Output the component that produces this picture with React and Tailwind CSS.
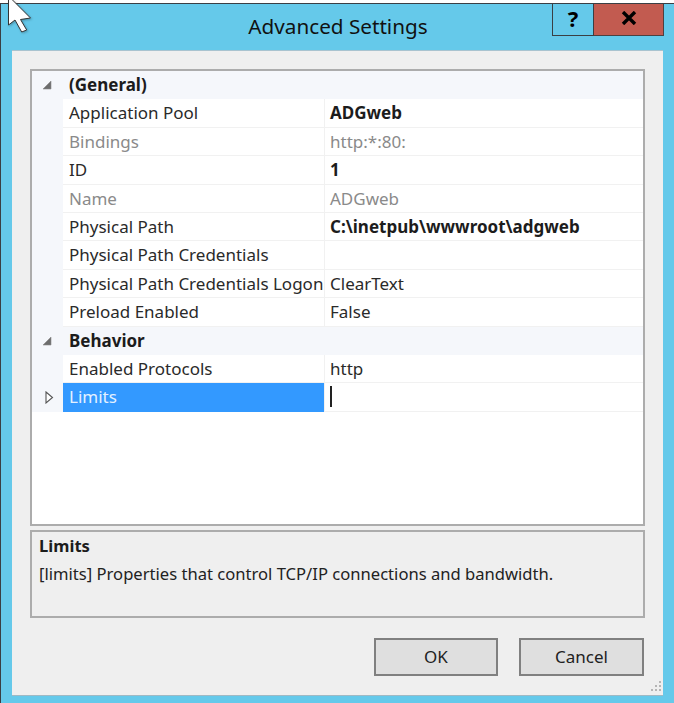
import React from 'react';

const FONT = "font-['Noto_Sans','Open_Sans',sans-serif]";

const rows = [
  { type: 'group', label: '(General)' },
  { label: 'Application Pool', value: 'ADGweb', bold: true },
  { label: 'Bindings', value: 'http:*:80:', muted: true },
  { label: 'ID', value: '1', bold: true },
  { label: 'Name', value: 'ADGweb', muted: true },
  { label: 'Physical Path', value: 'C:\\inetpub\\wwwroot\\adgweb', bold: true },
  { label: 'Physical Path Credentials', value: '' },
  { label: 'Physical Path Credentials Logon', value: 'ClearText' },
  { label: 'Preload Enabled', value: 'False' },
  { type: 'group', label: 'Behavior' },
  { label: 'Enabled Protocols', value: 'http' },
  { label: 'Limits', value: '', selected: true },
];

function Expanded() {
  return (
    <svg width="10" height="10" viewBox="0 0 10 10">
      <path d="M9 1 V9 H1 Z" fill="#6d6d6d" stroke="#8a8a8a" strokeWidth="0.6" />
    </svg>
  );
}

function Collapsed() {
  return (
    <svg width="9" height="13" viewBox="0 0 9 13">
      <path d="M1 1 L7.5 6.5 L1 12 Z" fill="#fff" stroke="#555" strokeWidth="1.1" />
    </svg>
  );
}

function Row({ row }) {
  if (row.type === 'group') {
    return (
      <div className="flex h-[28.4px] items-center bg-[#f5f7fb]">
        <div className="flex w-[32px] shrink-0 justify-center pr-[2px]"><Expanded /></div>
        <div className="pl-[5px] font-bold text-[#1c1c1c]">{row.label}</div>
      </div>
    );
  }
  return (
    <div className="flex h-[28.4px] items-stretch bg-white">
      <div className="flex w-[31px] shrink-0 items-center justify-center bg-[#f5f7fb] pl-[3px]">
        {row.selected && <Collapsed />}
      </div>
      <div className={`flex w-[261px] shrink-0 items-center border-b pl-[6px] whitespace-nowrap ${
        row.selected
          ? 'border-[#3399ff] bg-[#3399ff] text-[#e4f1ff]'
          : row.muted ? 'border-[#f1f1f1] text-[#8a8a8a]' : 'border-[#f1f1f1] text-[#2a2a2a]'
      }`}>
        {row.label}
      </div>
      <div className={`flex flex-1 items-center border-b border-l border-[#f1f1f1] pl-[5px] ${
        row.bold ? 'font-bold text-[#1c1c1c]' : row.muted ? 'text-[#8a8a8a]' : 'text-[#2a2a2a]'
      }`}>
        {row.selected ? <span className="h-[21px] w-[2px] bg-[#222]" /> : row.value}
      </div>
    </div>
  );
}

export default function App() {
  return (
    <div className={`relative h-[703px] w-[674px] overflow-hidden bg-white pt-[3px] text-[17px] ${FONT}`}>
      <div className="flex h-[700px] flex-col border-l border-t border-[#3a3f44] bg-[#65c9ea]">
        {/* Title bar */}
        <div className="flex h-[46px] shrink-0 items-start">
          <div className="w-[551px] pl-[123px] pt-[8px] text-center text-[20.7px] leading-[28px] text-[#111]">
            Advanced Settings
          </div>
          <div className="flex h-[32px] w-[42px] items-center justify-center border-x border-b border-[#3a3f44] pb-[3px] text-[22px] font-bold text-black">?</div>
          <div className="flex h-[32px] w-[70px] items-center justify-center border-r border-b border-[#4d4040] bg-[#c25b50] pb-[3px]">
            <svg width="16" height="14" viewBox="0 0 16 14">
              <path d="M2 1 L14 13 M14 1 L2 13" stroke="#000" strokeWidth="3.4" />
            </svg>
          </div>
        </div>

        {/* Dialog body */}
        <div className="ml-[11px] flex h-[645px] w-[651px] flex-col border-t border-[#a9c3cf] bg-[#efefef] px-[18px] pt-[18px] shadow-[0_1px_0_#9fb9c4]">
          <div className="h-[457px] border-2 border-[#acacac] bg-white">
            {rows.map((row) => <Row key={row.label} row={row} />)}
          </div>

          <div className="mt-[4px] h-[88px] border-2 border-[#acacac] px-[7px] pt-[3px] text-[16.6px] text-[#222]">
            <div className="font-bold leading-[22px] text-[#1c1c1c]">Limits</div>
            <div className="mt-[6px] leading-[22px]">[limits] Properties that control TCP/IP connections and bandwidth.</div>
          </div>

          <div className="mt-[20px] flex justify-end gap-[21px] pr-[1px]">
            <button className="h-[38px] w-[124px] border-2 border-[#808080] bg-[#dfdfdf] text-[#222]">OK</button>
            <button className="h-[38px] w-[125px] border-2 border-[#808080] bg-[#dfdfdf] text-[#222]">Cancel</button>
          </div>
        </div>
      </div>

      {/* Mouse pointer left over the window */}
      <svg className="absolute left-[8px] top-0 drop-shadow-[1px_1px_1px_rgba(0,0,0,0.25)]" width="26" height="34" viewBox="0 0 26 34">
        <path d="M0.5 -4 V25 L7 20 L13.7 32 L18.7 30 L12.5 19.5 L22.5 18 Z" fill="#fff" stroke="#333" strokeWidth="1" />
      </svg>

      {/* Resize grip */}
      <svg className="absolute left-[650px] top-[680px]" width="13" height="13" viewBox="0 0 13 13" fill="#b5b5b5">
        <rect x="9" y="1" width="2" height="2" />
        <rect x="5" y="5" width="2" height="2" />
        <rect x="9" y="5" width="2" height="2" />
        <rect x="1" y="9" width="2" height="2" />
        <rect x="5" y="9" width="2" height="2" />
        <rect x="9" y="9" width="2" height="2" />
      </svg>
    </div>
  );
}
